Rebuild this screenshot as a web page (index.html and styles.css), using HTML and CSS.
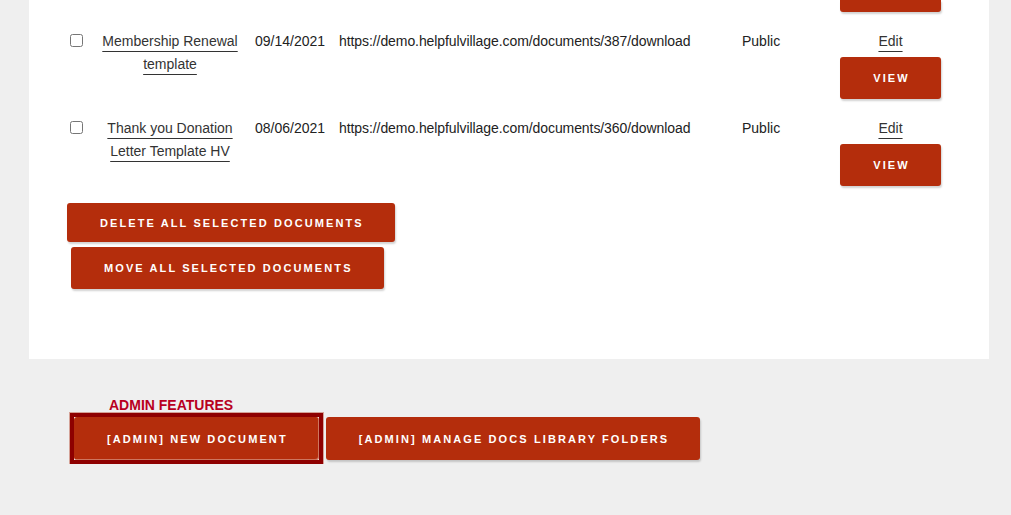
FILE: index.html
```html
<!DOCTYPE html>
<html lang="en">
<head>
  <meta charset="UTF-8">
  <meta name="viewport" content="width=device-width, initial-scale=1.0">
  <title>Docs Library</title>
  <link rel="stylesheet" href="styles.css">
</head>
<body>
  <div class="panel">
    <!-- bottom of the previous row's view button, rest is scrolled away -->
    <div class="prev-row">
      <div class="btn-stub"></div>
    </div>

    <div class="doc-row">
      <div class="cell-check"><input type="checkbox"></div>
      <div class="cell-title"><a href="#">Membership Renewal template</a></div>
      <div class="cell-date">09/14/2021</div>
      <div class="cell-url">https://demo.helpfulvillage.com/documents/387/download</div>
      <div class="cell-access">Public</div>
      <div class="cell-actions">
        <a href="#" class="edit-link">Edit</a>
        <button class="btn btn-view">View</button>
      </div>
    </div>

    <div class="doc-row">
      <div class="cell-check"><input type="checkbox"></div>
      <div class="cell-title"><a href="#">Thank you Donation Letter Template HV</a></div>
      <div class="cell-date">08/06/2021</div>
      <div class="cell-url">https://demo.helpfulvillage.com/documents/360/download</div>
      <div class="cell-access">Public</div>
      <div class="cell-actions">
        <a href="#" class="edit-link">Edit</a>
        <button class="btn btn-view">View</button>
      </div>
    </div>

    <div class="bulk-actions">
      <button class="btn btn-delete">Delete all selected documents</button>
      <button class="btn btn-move">Move all selected documents</button>
    </div>
  </div>

  <div class="admin">
    <div class="admin-label">ADMIN FEATURES</div>
    <div class="admin-buttons">
      <span class="focus-ring">
        <button class="btn btn-admin">[Admin] New Document</button>
      </span>
      <button class="btn btn-admin">[Admin] Manage Docs Library Folders</button>
    </div>
  </div>
</body>
</html>
```

FILE: styles.css
```css
* {
  margin: 0;
  padding: 0;
  box-sizing: border-box;
}

body {
  font-family: "Liberation Sans", Arial, sans-serif;
  font-size: 14px;
  background-color: #efefef;
  color: #222;
  overflow: hidden;
}

/* White documents panel */
.panel {
  background: #ffffff;
  width: 960px;
  margin-left: 29px;
  padding: 0 0 70px 33px;
}

.prev-row {
  height: 21px;
  padding-left: 778px;
}

.btn-stub {
  width: 101px;
  height: 12px;
  background: #b42d0c;
  border-radius: 0 0 3px 3px;
  box-shadow: 1px 2px 2px rgba(0, 0, 0, 0.18);
}

.doc-row {
  display: grid;
  grid-template-columns: 30px 156px 83px 403px 98px 117px;
  padding: 9px 0;
  line-height: 23px;
}

.cell-check input {
  display: block;
  width: 13px;
  height: 13px;
  margin: 4px 0 0 8px;
}

.cell-title {
  padding: 0 8px;
  text-align: center;
}

.cell-title a,
.edit-link {
  color: #333;
  text-decoration: underline;
  text-underline-offset: 5px;
  text-decoration-thickness: 1px;
}

.cell-date {
  padding-left: 7px;
}

.cell-url {
  padding-left: 8px;
  letter-spacing: -0.08px;
}

.cell-access {
  padding-left: 8px;
}

.cell-actions {
  display: flex;
  flex-direction: column;
  align-items: center;
  gap: 4px;
  padding: 0 8px;
}

/* Buttons */
.btn {
  display: inline-flex;
  align-items: center;
  justify-content: center;
  background: #b42d0c;
  color: #fff;
  border: none;
  border-radius: 3px;
  padding: 0 31px 0 33px;
  font-family: "Liberation Sans", Arial, sans-serif;
  font-size: 11px;
  font-weight: bold;
  letter-spacing: 2.1px;
  text-transform: uppercase;
  box-shadow: 1px 2px 2px rgba(0, 0, 0, 0.18);
  cursor: pointer;
}

.btn-view {
  width: 101px;
  height: 42px;
}

.bulk-actions {
  display: flex;
  flex-direction: column;
  align-items: flex-start;
  gap: 5px;
  margin-top: 8px;
}

.btn-delete {
  height: 39px;
  margin-left: 5px;
}

.btn-move {
  height: 42px;
  margin-left: 9px;
}

/* Admin area */
.admin {
  padding: 38px 0 0 70px;
}

.admin-label {
  margin-left: 39px;
  font-size: 14px;
  line-height: 16px;
  font-weight: bold;
  color: #b8001f;
}

.admin-buttons {
  display: flex;
  align-items: center;
  gap: 3px;
}

.btn-admin {
  height: 43px;
}

.focus-ring {
  display: flex;
  border: 4px solid #8e0000;
  outline: 1px solid #d4a297;
}

.focus-ring .btn-admin {
  height: 43px;
  box-shadow: inset -1px -1px 0 rgba(255, 255, 255, 0.35);
}
```
